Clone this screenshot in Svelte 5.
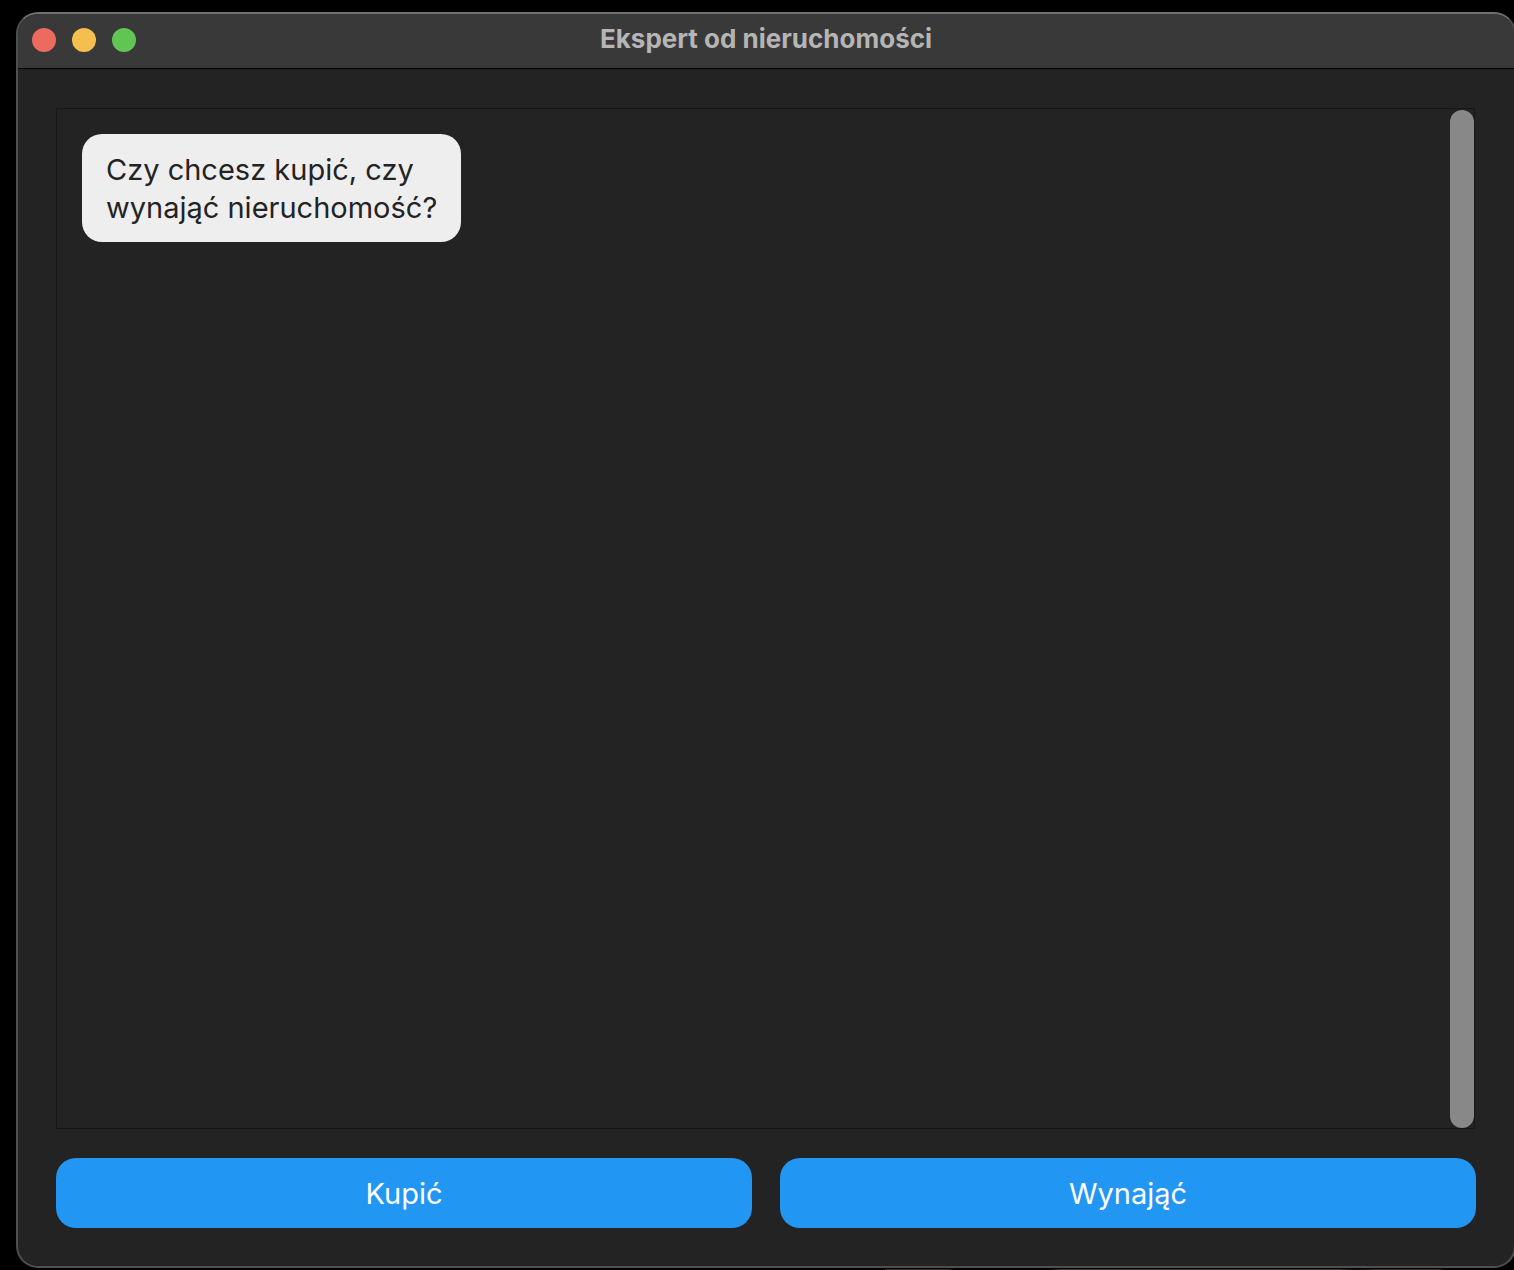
<script>
  const windowControls = [
    { name: 'Zamknij', tone: 'close' },
    { name: 'Minimalizuj', tone: 'minimize' },
    { name: 'Powiększ', tone: 'zoom' }
  ];
  const messages = [['Czy chcesz kupić, czy', 'wynająć nieruchomość?']];
  const answers = ['Kupić', 'Wynająć'];
</script>

<div class="desktop">
  <main class="window">
    <header class="titlebar">
      <div class="controls">
        {#each windowControls as control}
          <button class="control {control.tone}" aria-label={control.name}></button>
        {/each}
      </div>
      <h1>Ekspert od nieruchomości</h1>
    </header>

    <div class="content">
      <section class="log" aria-label="Rozmowa">
        <div class="messages">
          {#each messages as lines}
            <p class="bubble">{lines[0]}<br />{lines[1]}</p>
          {/each}
        </div>
        <div class="scrollbar"></div>
      </section>

      <div class="answers">
        {#each answers as answer}
          <button class="answer">{answer}</button>
        {/each}
      </div>
    </div>
  </main>
  <div class="backdrop-edge"></div>
</div>

<style>
  :global(body) {
    background: #000;
  }

  .desktop {
    box-sizing: border-box;
    display: flex;
    flex-direction: column;
    min-height: 100vh;
    padding-top: 12px;
    padding-left: 16px;
    overflow: hidden;
    background: #000;
    font-family: Inter, 'Liberation Sans', sans-serif;
  }

  /* The window's right edge runs just past the screen. */
  .window {
    flex: 1;
    display: flex;
    flex-direction: column;
    margin-right: -2px;
    border: 2px solid #4f4f4f;
    border-top-color: #707070;
    border-radius: 22px;
    background: #232323;
    overflow: hidden;
  }

  .titlebar {
    box-sizing: border-box;
    display: grid;
    grid-template-columns: 1fr auto 1fr;
    align-items: center;
    height: 55px;
    padding: 0 14px 2px;
    border-bottom: 1px solid #000;
    background: #393939;
  }

  .controls {
    display: flex;
    gap: 16px;
  }

  .control {
    width: 24px;
    height: 24px;
    padding: 0;
    border: 0;
    border-radius: 50%;
  }

  .close {
    background: #ed6a5e;
  }

  .minimize {
    background: #f5bf4f;
  }

  .zoom {
    background: #61c554;
  }

  h1 {
    margin: 0;
    padding-bottom: 2px;
    color: #b5b5b5;
    font-size: 26px;
    font-weight: 700;
    line-height: 32px;
  }

  .content {
    flex: 1;
    display: flex;
    flex-direction: column;
    gap: 29px;
    padding: 39px 38px 38px;
  }

  .log {
    flex: 1;
    display: flex;
    margin-right: 1px;
    border: 1px solid #171717;
  }

  .messages {
    flex: 1;
    padding: 25px;
  }

  .bubble {
    width: fit-content;
    margin: 0;
    padding: 17px 24px 15px;
    border-radius: 20px;
    background: #eee;
    color: #232323;
    font-size: 29px;
    line-height: 38px;
  }

  .scrollbar {
    width: 24px;
    margin-top: 1px;
    border-radius: 12px;
    background: #888;
  }

  .answers {
    display: grid;
    grid-template-columns: 1fr 1fr;
    gap: 28px;
  }

  .answer {
    height: 70px;
    padding: 0;
    border: 0;
    border-radius: 20px;
    background: #2196f3;
    color: #fff;
    font: inherit;
    font-size: 29px;
  }

  .backdrop-edge {
    align-self: flex-end;
    width: 42%;
    height: 1px;
    margin-top: 1px;
    background: linear-gradient(90deg, #33302c 10%, #000 11% 26%, #3a3833 28% 72%, #111 74% 76%, #33302c 78% 88%, #000 89%);
  }
</style>
